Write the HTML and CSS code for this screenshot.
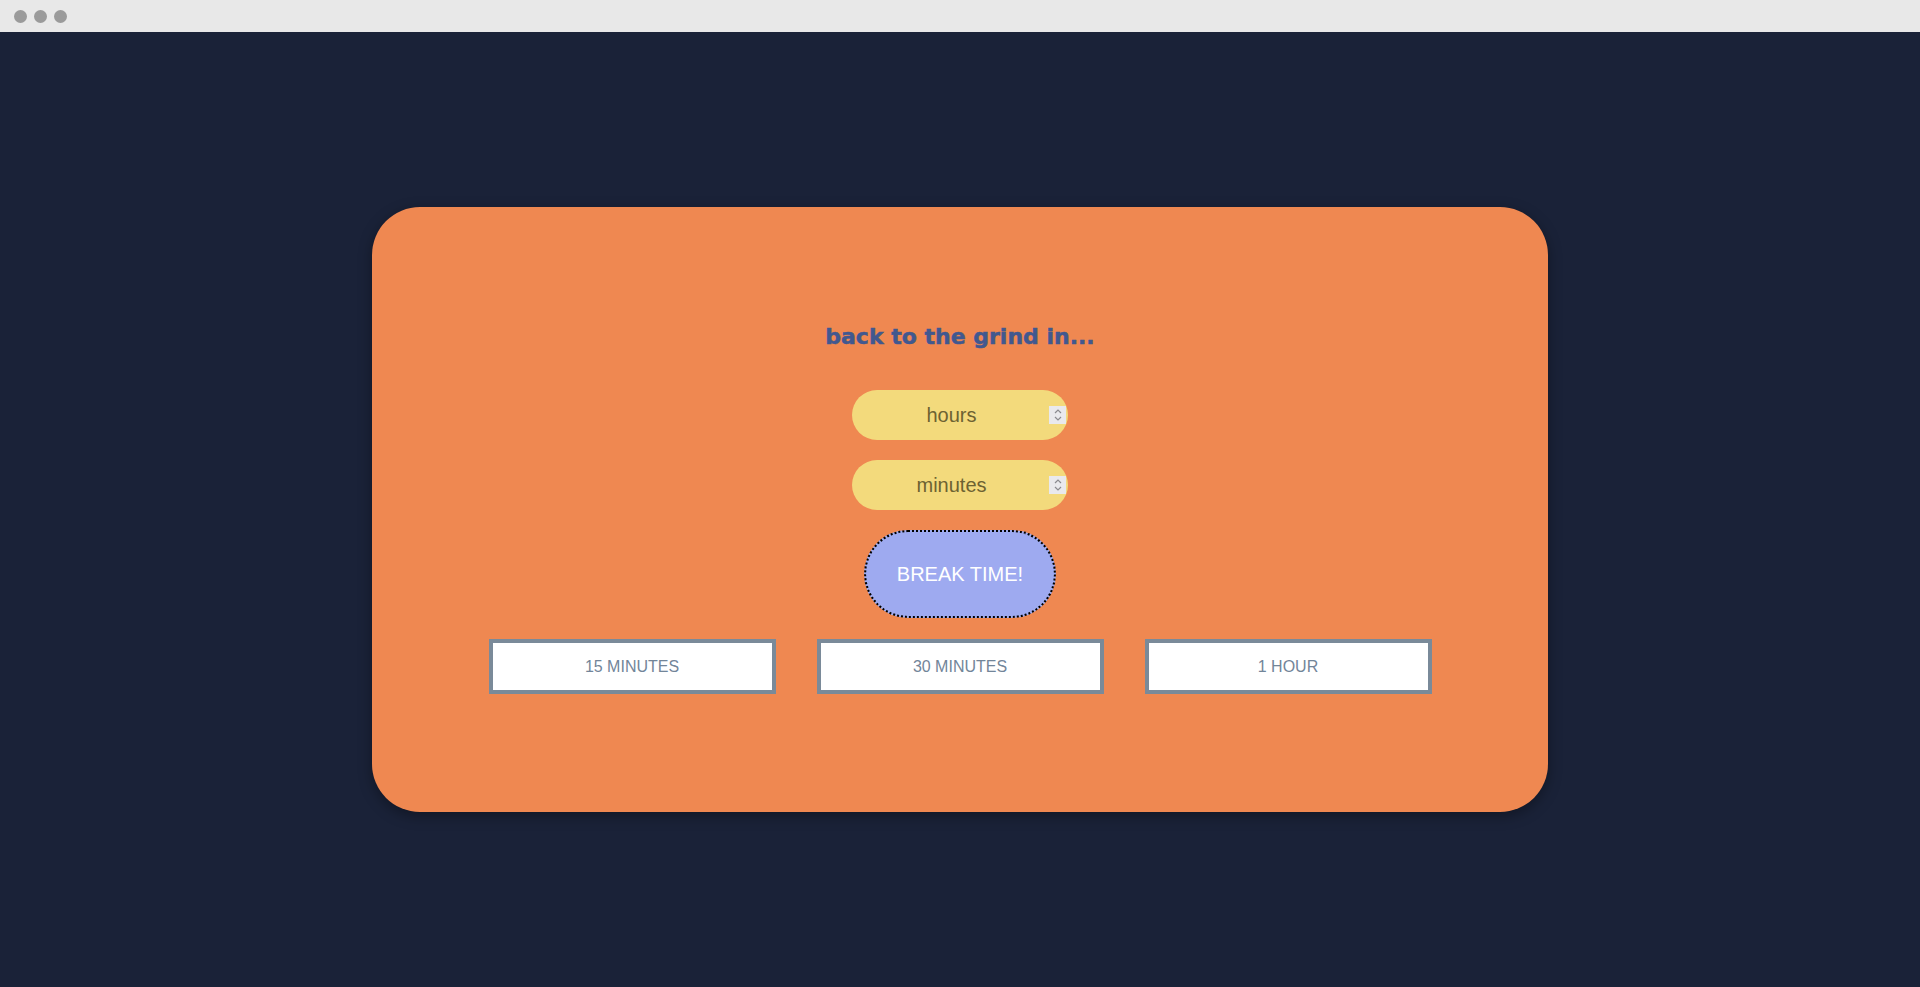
FILE: index.html
```html
<!DOCTYPE html>
<html lang="en">
<head>
<meta charset="utf-8">
<title>Break Timer</title>
<link rel="stylesheet" href="styles.css">
</head>
<body>
  <div class="window-bar">
    <span class="dot"></span><span class="dot"></span><span class="dot"></span>
  </div>
  <main class="stage">
    <section class="card">
      <h1 class="title">back to the grind in...</h1>
      <div class="field">
        <span class="field-text">hours</span>
        <span class="spinner">
          <svg width="10" height="14" viewBox="0 0 10 14"><path d="M2 5 L5 2 L8 5 M2 9 L5 12 L8 9" fill="none" stroke="#8b8b90" stroke-width="1.2"/></svg>
        </span>
      </div>
      <div class="field">
        <span class="field-text">minutes</span>
        <span class="spinner">
          <svg width="10" height="14" viewBox="0 0 10 14"><path d="M2 5 L5 2 L8 5 M2 9 L5 12 L8 9" fill="none" stroke="#8b8b90" stroke-width="1.2"/></svg>
        </span>
      </div>
      <button class="break-btn">BREAK TIME!</button>
      <div class="presets">
        <button class="preset">15 MINUTES</button>
        <button class="preset">30 MINUTES</button>
        <button class="preset">1 HOUR</button>
      </div>
    </section>
  </main>
</body>
</html>
```
FILE: styles.css
```css
* { box-sizing: border-box; }
html, body { margin: 0; padding: 0; }
body {
  background: #1a2238;
  font-family: "Liberation Sans", Arial, sans-serif;
  height: 987px;
  overflow: hidden;
}
.window-bar {
  height: 32px;
  background: #e8e8e8;
  display: flex;
  align-items: center;
  gap: 7px;
  padding-left: 14px;
}
.dot {
  width: 13px;
  height: 13px;
  border-radius: 50%;
  background: #9a9a9a;
}
.stage {
  height: 955px;
  display: flex;
  align-items: center;
  justify-content: center;
}
.card {
  width: 1176px;
  height: 605px;
  background: #ef8851;
  border-radius: 48px;
  box-shadow: 0 4px 14px rgba(0, 0, 0, 0.35);
  display: flex;
  flex-direction: column;
  align-items: center;
  justify-content: center;
  padding-bottom: 5px;
}
.title {
  margin: 2px 0 38px;
  height: 30px;
  line-height: 30px;
  font-family: "DejaVu Sans", sans-serif;
  font-weight: 700;
  font-size: 22px;
  color: #41588f;
  -webkit-text-stroke: 0.5px #41588f;
}
.field {
  width: 216px;
  height: 50px;
  border-radius: 25px;
  background: #f3da7c;
  display: flex;
  align-items: center;
  padding: 0 2px;
  margin-bottom: 20px;
}
.field-text {
  flex: 1;
  text-align: center;
  font-size: 20px;
  color: #6d6232;
}
.spinner {
  width: 17px;
  height: 18px;
  background: #e9e9ed;
  display: flex;
  align-items: center;
  justify-content: center;
}
.break-btn {
  width: 192px;
  height: 88px;
  border-radius: 44px;
  background: #9eaaf0;
  border: 2px dotted #000;
  color: #fff;
  font-family: "Liberation Sans", Arial, sans-serif;
  font-size: 20px;
  margin: 0 0 21px;
  padding: 0;
}
.presets {
  display: flex;
  gap: 41px;
}
.preset {
  width: 287px;
  height: 55px;
  background: #fff;
  border: 4px solid #7a8a99;
  color: #728599;
  font-family: "Liberation Sans", Arial, sans-serif;
  font-size: 16px;
  padding: 0;
}
```
